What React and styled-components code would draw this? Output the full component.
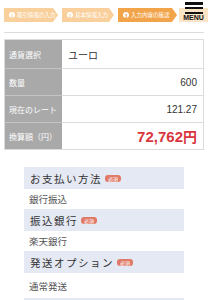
import React from "react";
import styled, { createGlobalStyle } from "styled-components";

const GlobalStyle = createGlobalStyle`
  body {
    margin: 0;
    background: #fff;
    font-family: "Noto Sans CJK JP", "Noto Sans", sans-serif;
  }
`;

const Page = styled.div`
  width: 208px;
  height: 300px;
  overflow: hidden;
`;

/* Steps header */

const Header = styled.header`
  display: flex;
  align-items: center;
  padding: 8px 0 0 4px;
  height: 14px;
`;

const Step = styled.div`
  display: flex;
  align-items: center;
  gap: 2px;
  height: 14px;
  width: ${(p) => p.w}px;
  margin-right: ${(p) => p.mr}px;
  padding-left: 5px;
  box-sizing: border-box;
  background: ${(p) => (p.active ? "#f2a44a" : "#f9cf9b")};
  clip-path: polygon(0 0, calc(100% - 5px) 0, 100% 50%, calc(100% - 5px) 100%, 0 100%);
  color: #fff;
  font-size: 5.5px;
  white-space: nowrap;
  overflow: hidden;
`;

const Num = styled.span`
  display: inline-flex;
  align-items: center;
  justify-content: center;
  width: 6px;
  height: 6px;
  border-radius: 50%;
  background: #fff;
  color: ${(p) => (p.active ? "#f2a44a" : "#f9cf9b")};
  font-size: 5px;
  font-weight: bold;
  flex-shrink: 0;
`;

const Menu = styled.div`
  margin-left: auto;
  width: 29px;
  height: 14px;
  background: #fbe3c6;
  position: relative;
  display: flex;
  align-items: flex-end;
  justify-content: center;
`;

const MenuIcon = styled.div`
  position: absolute;
  top: -6px;
  left: 6px;
  width: 18px;
  height: 12px;
  display: flex;
  flex-direction: column;
  justify-content: space-between;
  span {
    display: block;
    height: 2.5px;
    background: #111;
  }
`;

const MenuText = styled.span`
  font-family: "Liberation Sans", Arial, sans-serif;
  font-weight: bold;
  font-size: 7px;
  line-height: 7px;
  color: #111;
  margin-bottom: 1px;
`;

const Rule = styled.div`
  margin: 10px 4px 0;
  height: 1px;
  background: #dedede;
`;

/* Table */

const Table = styled.div`
  margin: 6px 4px 0;
  border: 1px solid #dcdcdc;
  display: grid;
  grid-template-columns: 57px 1fr;
`;

const Label = styled.div`
  background: #a9a9a9;
  color: #fff;
  font-size: 8px;
  display: flex;
  align-items: center;
  padding-left: 4px;
  height: ${(p) => p.h}px;
  border-top: ${(p) => (p.first ? "none" : "1px solid #c4c4c4")};
`;

const Value = styled.div`
  display: flex;
  align-items: center;
  justify-content: ${(p) => (p.left ? "flex-start" : "flex-end")};
  padding: 0 6px;
  height: ${(p) => p.h}px;
  border-top: ${(p) => (p.first ? "none" : "1px solid #dcdcdc")};
  font-family: ${(p) => (p.left ? '"Noto Sans CJK JP", sans-serif' : '"Liberation Sans", Arial, sans-serif')};
  font-size: 10px;
  color: #333;
`;

const Amount = styled.span`
  font-family: "Liberation Sans", Arial, sans-serif;
  font-weight: bold;
  font-size: 15px;
  color: #d9363e;
  small {
    font-family: "Noto Sans CJK JP", sans-serif;
    font-size: 14px;
  }
`;

/* Options */

const Options = styled.section`
  margin: 17px 24px 0;
`;

const OptHead = styled.div`
  background: #e5e9f3;
  height: ${(p) => p.h}px;
  display: flex;
  align-items: center;
  gap: 3px;
  padding-left: 6px;
  font-size: 10.5px;
  letter-spacing: 1.5px;
  color: #333;
`;

const Badge = styled.span`
  background: #e07a68;
  color: #fff;
  font-size: 5px;
  letter-spacing: 0;
  border-radius: 3px;
  padding: 0 3px;
  height: 7px;
  line-height: 7px;
`;

const OptValue = styled.div`
  height: ${(p) => p.h}px;
  display: flex;
  align-items: center;
  padding-left: 5px;
  font-size: 9.5px;
  color: #555;
`;

const rows = [
  { label: "通貨選択", value: "ユーロ", left: true, h: 28 },
  { label: "数量", value: "600", h: 26 },
  { label: "現在のレート", value: "121.27", h: 26 },
];

const options = [
  { title: "お支払い方法", value: "銀行振込", h: 20 },
  { title: "振込銀行", value: "楽天銀行", h: 20 },
  { title: "発送オプション", value: "通常発送", h: 25 },
];

const App = () => {
  return (
    <>
      <GlobalStyle />
      <Page>
        <Header>
          <Step w={54} mr={4}>
            <Num>1</Num>取引情報の入力
          </Step>
          <Step w={52} mr={4}>
            <Num>2</Num>基本情報入力
          </Step>
          <Step w={59} mr={0} active>
            <Num active>3</Num>入力内容の確認
          </Step>
          <Menu>
            <MenuIcon>
              <span />
              <span />
              <span />
            </MenuIcon>
            <MenuText>MENU</MenuText>
          </Menu>
        </Header>
        <Rule />
        <Table>
          {rows.map((r, i) => (
            <React.Fragment key={r.label}>
              <Label h={r.h} first={i === 0}>
                {r.label}
              </Label>
              <Value h={r.h} first={i === 0} left={r.left}>
                {r.value}
              </Value>
            </React.Fragment>
          ))}
          <Label h={26}>換算額（円）</Label>
          <Value h={26}>
            <Amount>
              72,762<small>円</small>
            </Amount>
          </Value>
        </Table>
        <Options>
          {options.map((o) => (
            <React.Fragment key={o.title}>
              <OptHead h={22}>
                {o.title}
                <Badge>必須</Badge>
              </OptHead>
              <OptValue h={o.h}>{o.value}</OptValue>
            </React.Fragment>
          ))}
          <OptHead h={22} />
        </Options>
      </Page>
    </>
  );
};

export default App;
